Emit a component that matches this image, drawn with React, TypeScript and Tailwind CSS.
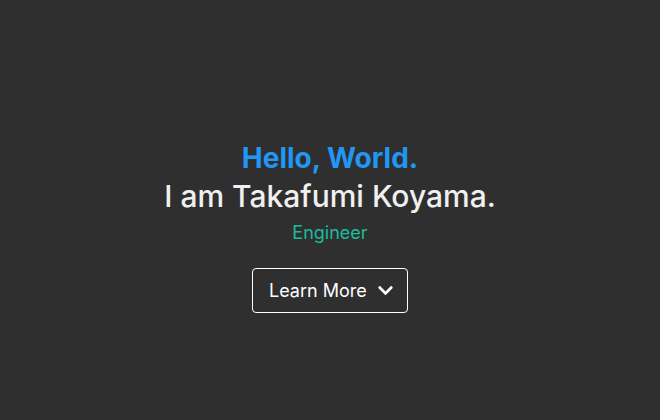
import React from 'react';
import { FaChevronDown } from 'react-icons/fa';

export default function App() {
  return (
    <div
      className="w-full h-[420px] bg-[#2f2f2f] flex flex-col items-center pt-[140px]"
      style={{ fontFamily: 'Inter, "Noto Sans", sans-serif' }}
    >
      <h2 className="text-[28px] leading-[36px] font-bold text-[#2196f3]">Hello, World.</h2>
      <h1 className="text-[30px] leading-[40px] font-medium text-[#f0f0f0]">I am Takafumi Koyama.</h1>
      <p className="mt-[3px] text-[18px] leading-[28px] text-[#1abc9c]">Engineer</p>
      <button
        type="button"
        className="mt-[21px] h-[45px] w-[156px] pl-4 pr-[13px] border border-white rounded text-white text-[18px] flex items-center justify-between"
      >
        Learn More
        <FaChevronDown className="w-[17px] h-[17px]" />
      </button>
    </div>
  );
}
